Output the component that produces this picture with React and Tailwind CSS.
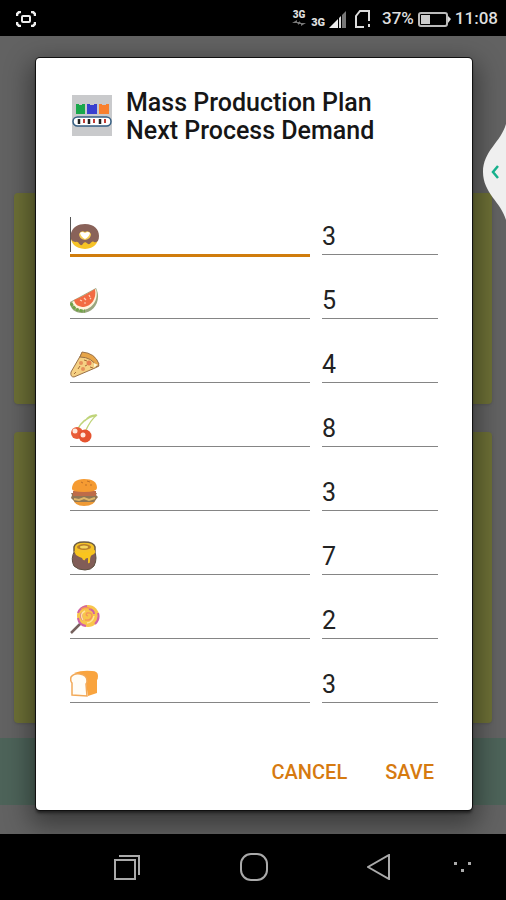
import React, { useState } from 'react';

const Donut = () => (
  <svg viewBox="0 0 30 30" className="mt-1.5 size-[30px]">
    <path d="M1 14 Q0 27 15 28 Q29 27 28 14Z" fill="#f7c325" />
    <path d="M15 3 C24 3 29 8 29 15 C29 20 27 22 24 21 C21 19 21 24 18 23 C15 20 14 21 12 24 C9 25 9 20 6 21 C1 21 0 17 1 12 C3 6 8 3 15 3Z" fill="#896259" />
    <path d="M9 13 Q11 9 15 11 Q19 9 21 13 Q21 18 15 19 Q9 18 9 13Z" fill="#f6cf55" />
    <path d="M10 12 Q12 10 15 12 Q18 10 20 12 Q19 16 15 18 Q11 16 10 12Z" fill="#fff" />
  </svg>
);

const Watermelon = () => (
  <svg viewBox="0 0 30 30" className="mt-1.5 size-[30px]">
    <path d="M26 3 C32 15 24 28 12 28 C5 28 0 24 0 17Z" fill="#9aa67f" />
    <path d="M26 4 C29 15 22 24 13 25 C7 25 3 22 2 17Z" fill="#fff3dc" />
    <path d="M25 4 C27 14 21 21 14 22 C9 22 5 20 4 15 Q12 12 25 4Z" fill="#f26b43" />
    <path d="M1 18 Q4 26 15 26" fill="none" stroke="#70a447" strokeWidth="3" strokeDasharray="3 1" />
    <path d="M10 15l2 1M14 13l2 2M19 10l1 2M14 18l2 0M20 14l1-1" stroke="#ffd1b7" strokeWidth="1.2" />
  </svg>
);

const Pizza = () => (
  <svg viewBox="0 0 30 30" className="mt-1.5 size-[30px]">
    <path d="M12 4 Q26 5 29 17 L25 19 L4 28 Q0 28 1 23Z" fill="#f5d083" stroke="#9a7249" />
    <path d="M12 3 Q25 4 29 15 L27 18 Q22 8 10 8Z" fill="#e7a549" stroke="#9a7249" />
    <circle cx="19" cy="14" r="2.5" fill="#e67d50" />
    <circle cx="11" cy="14" r="2" fill="#e6905b" />
    <circle cx="13" cy="20" r="2" fill="#e6905b" />
    <path d="M8 20l2-3M4 25l2-2M20 18l3 1M14 11l3 1M15 17l2-1" stroke="#a36c38" />
    <path d="M24 14l4 2-4 2z" fill="#fff7d5" />
  </svg>
);

const Cherries = () => (
  <svg viewBox="0 0 30 30" className="mt-1.5 size-[30px]">
    <path d="M7 17 Q13 5 27 2 Q21 6 15 19 M26 2 Q19 2 15 8" fill="none" stroke="#bfd47a" strokeWidth="1.3" />
    <circle cx="7" cy="20" r="6" fill="#e95d38" />
    <circle cx="15" cy="23" r="6.5" fill="#e5532f" />
    <circle cx="5" cy="18" r="2.5" fill="#ffe7da" />
    <circle cx="13" cy="22" r="2.5" fill="#ffe7da" />
  </svg>
);

const Burger = () => (
  <svg viewBox="0 0 30 30" className="mt-1.5 size-[30px]">
    <path d="M3 21 H26 Q25 29 14 29 Q4 29 3 21Z" fill="#ef9a35" />
    <path d="M1 16 H27 L26 18 L28 20 L24 25 H5 L1 21 L2 18Z" fill="#8e7655" />
    <path d="M3 14 H26 V19 H3Z" fill="#bd6c49" />
    <path d="M4 22 L9 23 L14 21 L19 23 L25 21" fill="none" stroke="#dfb869" strokeWidth="2" />
    <path d="M2 12 Q2 2 14 2 Q27 2 27 11 Q27 15 14 15 Q2 15 2 12Z" fill="#f59b32" />
    <path d="M11 5l2 1M17 4l3 1M20 8l2 0M15 8l2 0" stroke="#bd7029" />
  </svg>
);

const HoneyPot = () => (
  <svg viewBox="0 0 30 30" className="mt-1.5 size-[30px]">
    <path d="M5 9 Q0 18 4 25 Q8 29 15 29 Q21 29 24 25 Q28 17 24 9Z" fill="#815d57" stroke="#5d5041" />
    <path d="M4 6 Q5 1 14 1 Q24 1 25 6 V11 Q22 14 14 14 Q5 14 4 10Z" fill="#f5c328" stroke="#6b5b43" strokeWidth="1.5" />
    <path d="M4 10 Q14 14 25 9 Q26 13 22 14 Q20 15 20 20 Q20 23 18 22 V17 Q15 17 15 19 Q13 20 12 17 Q9 16 6 14Z" fill="#f9c51e" />
    <ellipse cx="14" cy="6" rx="7" ry="3" fill="#b87e2c" />
    <ellipse cx="14" cy="6" rx="4" ry="1.5" fill="#f5d65c" />
  </svg>
);

const Lollipop = () => (
  <svg viewBox="0 0 30 30" className="mt-1.5 size-[30px]">
    <path d="M1 28 L11 18" stroke="#75615d" strokeWidth="2.5" />
    <circle cx="18" cy="11" r="11" fill="#f8c54b" />
    <path d="M8 8 Q10 2 17 1 M8 13 Q9 20 16 21 M25 19 Q30 14 28 8 M12 8 Q10 12 13 15 M19 4 Q24 5 24 9" fill="none" stroke="#cf62a8" strokeWidth="2" />
    <path d="M18 11 q-3-1-1-3 q5-1 5 3 q-1 5-7 4 M11 4 q5-3 10 0" fill="none" stroke="#f4925c" strokeWidth="1.3" />
    <path d="M15 6 Q9 9 13 15 M24 11 Q23 17 17 18" fill="none" stroke="#ffe59b" strokeWidth="1.5" />
  </svg>
);

const Bread = () => (
  <svg viewBox="0 0 30 30" className="mt-1.5 size-[30px]">
    <path d="M4 4 Q12 1 22 2 Q28 2 28 7 Q28 10 27 11 V24 L18 27 L15 8Z" fill="#f9a43e" />
    <path d="M2 26 V14 Q0 12 1 8 Q4 4 10 5 Q17 6 17 12 Q17 14 16 15 L17 27Z" fill="#fffdf7" stroke="#f2a958" strokeWidth="1.5" />
  </svg>
);

const products = [
  { name: 'Donut', Icon: Donut, demand: '3' },
  { name: 'Watermelon', Icon: Watermelon, demand: '5' },
  { name: 'Pizza', Icon: Pizza, demand: '4' },
  { name: 'Cherries', Icon: Cherries, demand: '8' },
  { name: 'Burger', Icon: Burger, demand: '3' },
  { name: 'Honey', Icon: HoneyPot, demand: '7' },
  { name: 'Lollipop', Icon: Lollipop, demand: '2' },
  { name: 'Bread', Icon: Bread, demand: '3' },
];

const StatusBar = () => (
  <header className="flex h-9 items-center justify-between bg-black pl-4 pr-2 pt-0.5 text-[17px] font-medium text-[#dedede]">
    <svg viewBox="0 0 20 16" className="h-4 w-5" fill="none" stroke="#eee" strokeWidth="2.5">
      <path d="M1 5 V3 L3 1 H5 M15 1 H17 L19 3 V5 M19 11 V13 L17 15 H15 M5 15 H3 L1 13 V11" />
      <rect x="6" y="5" width="8" height="6" rx="1" strokeWidth="2" />
    </svg>
    <div className="flex items-center">
      <div className="flex w-4 flex-col items-center text-[10px] font-black leading-2">
        3G
        <svg viewBox="0 0 14 8" className="h-2 w-[14px]" fill="#777">
          <path d="M0 4 L5 1 V3 H9 L6 6 V4Z M14 4 L9 7 V5 H5 L8 2 V4Z" />
        </svg>
      </div>
      <span className="ml-1 mt-2 text-[11px] font-black leading-3">3G</span>
      <svg viewBox="0 0 17 17" className="ml-1 h-[17px] w-[17px]">
        <path d="M0 17 L9 8 V17Z" fill="#eee" />
        <path d="M10 7 L12 5 V17 H10Z" fill="#ddd" />
        <path d="M13 4 L17 0 V17 H13Z" fill="#777" />
      </svg>
      <svg viewBox="0 0 16 18" className="ml-2 h-[18px] w-4" fill="none" stroke="#ddd" strokeWidth="2">
        <path d="M10 17 H2 V6 L6 1 H15 V11 M15 14 V17" />
      </svg>
      <span className="ml-3">37%</span>
      <svg viewBox="0 0 33 15" className="ml-1 h-[15px] w-[33px]">
        <rect x="1" y="1" width="28" height="13" rx="2" fill="none" stroke="#bbb" strokeWidth="2" />
        <rect x="3" y="3" width="9" height="9" fill="#ccc" />
        <path d="M30 4 L33 7 L30 11Z" fill="#ddd" />
      </svg>
      <span className="ml-1">11:08</span>
    </div>
  </header>
);

const NavBar = () => (
  <nav className="flex h-[66px] items-center justify-between bg-black pl-[114px] pr-[34px]">
    <button aria-label="Recent apps">
      <svg viewBox="0 0 26 26" className="size-[26px]" fill="none" stroke="#aaa" strokeWidth="2">
        <path d="M1 6 H21 V25 H1Z M5 2 H25 V21" />
      </svg>
    </button>
    <button aria-label="Home">
      <svg viewBox="0 0 28 28" className="size-7" fill="none" stroke="#aaa" strokeWidth="2">
        <rect x="1" y="1" width="26" height="26" rx="10" />
      </svg>
    </button>
    <div className="flex items-center gap-[63px]">
      <button aria-label="Back">
        <svg viewBox="0 0 24 26" className="h-[26px] w-6" fill="none" stroke="#aaa" strokeWidth="2">
          <path d="M22 1 V25 L1 13Z" />
        </svg>
      </button>
      <button aria-label="More">
        <svg viewBox="0 0 18 12" className="h-3 w-[18px]" fill="#aaa">
          <path d="M0 1h3v3H0z M7 8h3v3H7z M14 1h3v3h-3z" />
        </svg>
      </button>
    </div>
  </nav>
);

const TitleIcon = () => (
  <svg viewBox="0 0 40 41" className="ml-0.5 mt-1.5 h-[41px] w-10 shrink-0">
    <rect width="40" height="41" fill="#c9cacc" />
    <path d="M4 9h3v1h3V9h3v10H4z" fill="#19a84b" />
    <path d="M15 9h3v1h4V9h3v10H15z" fill="#3940cf" />
    <path d="M27 9h3v1h4V9h3v10H27z" fill="#f9802e" />
    <rect x="1" y="22" width="38" height="9" rx="4.5" fill="#fff" stroke="#345e82" strokeWidth="1.5" />
    <path d="M7 24v5M17 24v5M28 24v5" stroke="#222" strokeWidth="2.5" />
    <path d="M12 24v4M22 24v4M33 24v4" stroke="#bd3a33" strokeWidth="2" />
  </svg>
);

const App = () => {
  const [names, setNames] = useState(products.map(() => ''));
  const [demands, setDemands] = useState(products.map((p) => p.demand));

  const update = (list, setList, index, value) => {
    const next = [...list];
    next[index] = value;
    setList(next);
  };

  return (
    <div className="flex min-h-screen flex-col font-[Roboto,sans-serif]">
      <StatusBar />

      <main className="relative grid flex-1 overflow-hidden bg-[#626262]">
        {/* Dimmed page behind the dialog */}
        <div className="col-start-1 row-start-1 flex flex-col pt-[157px]">
          <div className="mx-3.5 h-[211px] rounded-sm bg-[#6d7036] shadow" />
          <div className="mx-3.5 mt-7 h-[291px] rounded-sm bg-[#6d7036] shadow" />
          <div className="mt-[15px] h-[67px] bg-[#4d6359]" />
        </div>

        <form
          role="dialog"
          aria-labelledby="dialog-title"
          onSubmit={(e) => e.preventDefault()}
          className="z-10 col-start-1 row-start-1 mb-6 ml-9 mr-[34px] mt-[22px] flex flex-col rounded-sm bg-white px-[34px] pt-[31px] shadow-[0_0_0_1px_#111,0_3px_3px_#222,0_10px_26px_6px_rgba(0,0,0,0.4)]"
        >
          <div className="flex">
            <TitleIcon />
            <h1 id="dialog-title" className="ml-3.5 text-[25px] font-medium leading-7 text-[#161616]">
              Mass Production Plan<br />Next Process Demand
            </h1>
          </div>

          <div className="mt-[46px]">
            {products.map(({ name, Icon, demand }, index) => (
              <div key={name} className="grid h-16 grid-cols-[1fr_116px] items-end gap-3">
                <label
                  className={`flex h-10 items-start border-b ${index === 0 ? 'border-[#d07c0c] shadow-[0_2px_0_#d07c0c]' : 'border-[#858585]'}`}
                >
                  {index === 0 && <span className="-mr-px mt-0.5 h-[35px] w-px bg-[#555]" />}
                  <Icon />
                  <input
                    type="text"
                    aria-label={name}
                    value={names[index]}
                    onChange={(e) => update(names, setNames, index, e.target.value)}
                    className="h-9 min-w-0 flex-1 outline-none"
                  />
                </label>
                <input
                  type="text"
                  inputMode="numeric"
                  aria-label={`${name} demand`}
                  value={demands[index]}
                  onChange={(e) => update(demands, setDemands, index, e.target.value)}
                  className="h-10 w-full border-b border-[#858585] pt-1 text-[25px] leading-8 text-[#222] outline-none"
                />
              </div>
            ))}
          </div>

          <div className="mt-auto flex justify-end gap-[38px] pb-6 pr-1 text-[20px] font-medium leading-7 text-[#d67a10]">
            <button type="button">CANCEL</button>
            <button type="submit">SAVE</button>
          </div>
        </form>

        <button aria-label="Open side panel" className="absolute right-0 top-[88px] z-20">
          <svg viewBox="0 0 23 96" className="h-24 w-[23px]">
            <path d="M23 0 C18 18 0 27 0 48 C0 69 18 78 23 96Z" fill="#efefef" />
            <path d="M15 42 L10 48 L15 54" fill="none" stroke="#16b08c" strokeWidth="2.5" />
          </svg>
        </button>
      </main>

      <NavBar />
    </div>
  );
};

export default App;
